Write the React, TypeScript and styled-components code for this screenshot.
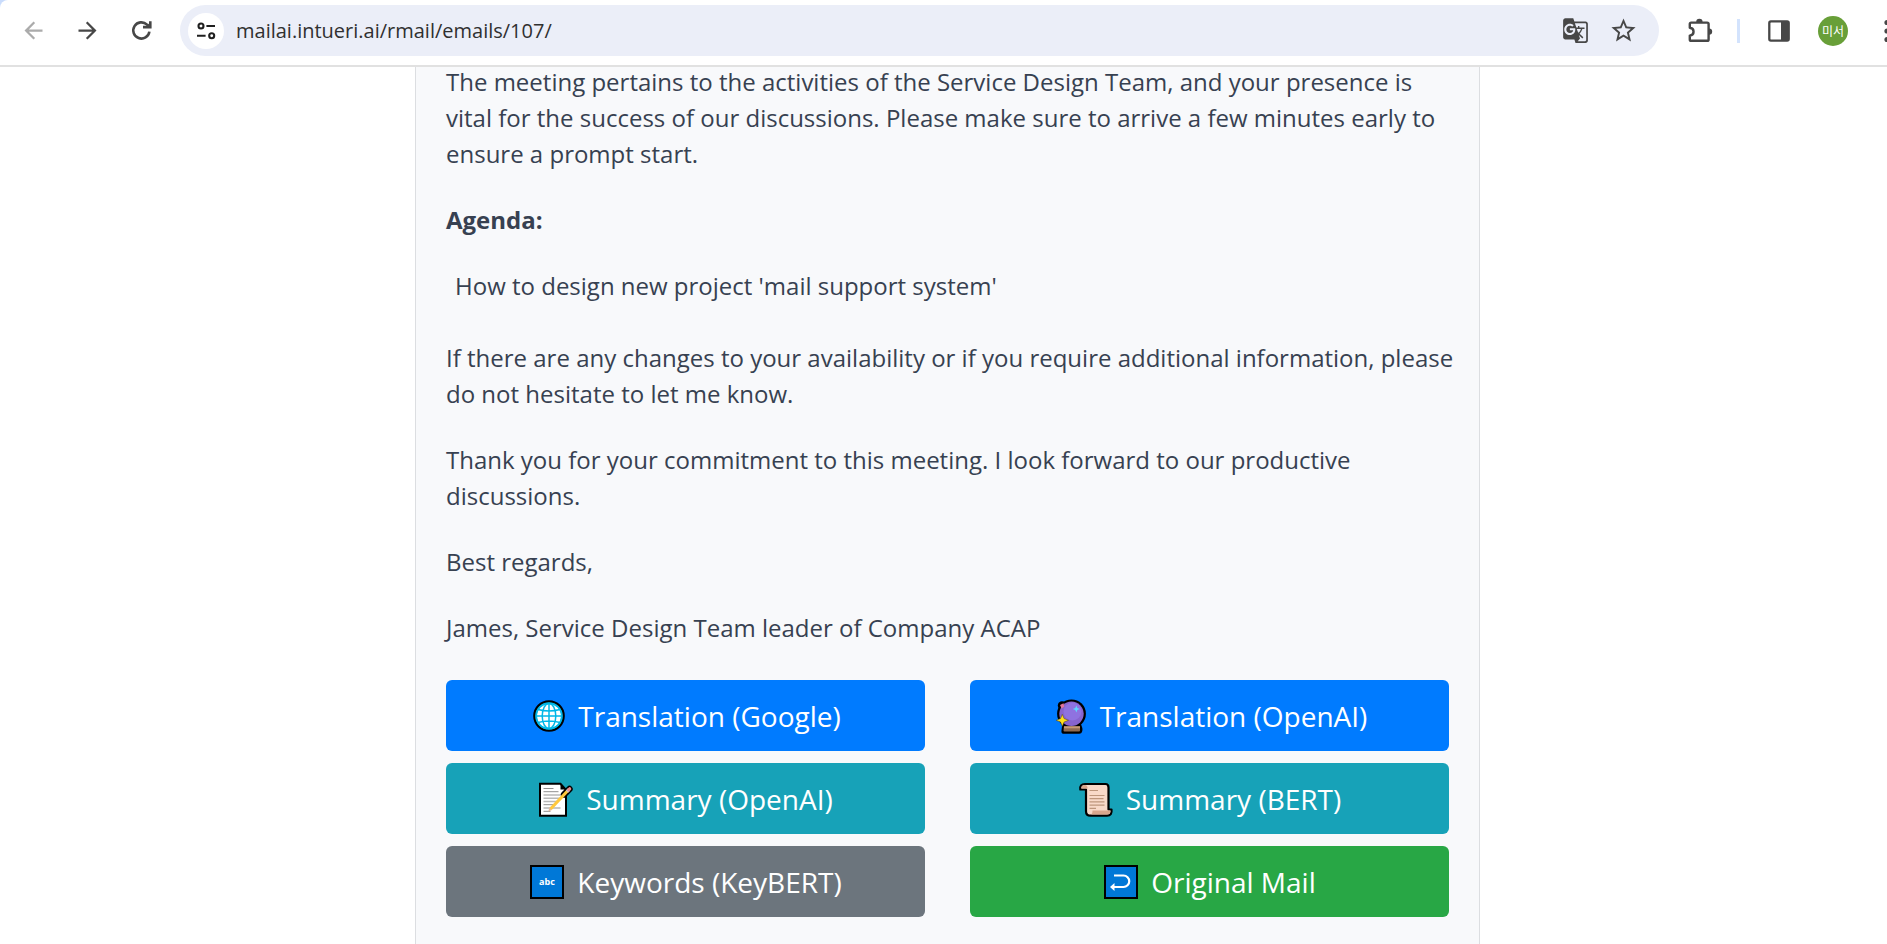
import React from "react";
import styled, { createGlobalStyle } from "styled-components";
import { MdArrowBack, MdArrowForward, MdGTranslate, MdStarBorder } from "react-icons/md";

const GlobalStyle = createGlobalStyle`
  * { box-sizing: border-box; }
  body {
    margin: 0;
    background: #ffffff;
    color: #374151;
    font-family: "Open Sans", "Noto Sans CJK KR", sans-serif;
  }
`;

const Shell = styled.div`
  display: flex;
  flex-direction: column;
  height: 100vh;
  overflow: hidden;
`;

/* ---------- browser bar ---------- */

const TabStripEdge = styled.header`
  position: relative;
  z-index: 1;
  flex: none;
  background: #c9dcfc;
`;

const Toolbar = styled.div`
  display: flex;
  align-items: center;
  padding: 5px 0 9px 6px;
  background: #ffffff;
  border-bottom: 2px solid #e1e1e1;
  border-top-left-radius: 8px;
`;

const ToolButton = styled.button<{ $tone?: string }>`
  display: flex;
  flex: none;
  align-items: center;
  justify-content: center;
  width: 54px;
  height: 48px;
  padding: 0;
  border: 0;
  background: none;
  color: ${(p) => p.$tone ?? "#474747"};
`;

const AddressBar = styled.form`
  display: flex;
  flex: 1;
  align-items: center;
  min-width: 0;
  height: 51px;
  margin-left: 12px;
  padding: 0 12px 0 8px;
  border-radius: 26px;
  background: #ebeef8;
`;

const SiteInfoButton = styled.button`
  display: flex;
  flex: none;
  align-items: center;
  justify-content: center;
  width: 36px;
  height: 36px;
  padding: 0;
  border: 0;
  border-radius: 50%;
  background: #ffffff;
  color: #1f1f1f;
`;

const AddressInput = styled.input`
  flex: 1;
  min-width: 0;
  height: 36px;
  padding: 0 12px;
  border: 0;
  outline: 0;
  background: none;
  color: #303030;
  font: 400 20px/28px "Open Sans", sans-serif;
`;

const AddressAction = styled(ToolButton)`
  width: 48px;
`;

const Extras = styled.div`
  display: flex;
  flex: none;
  align-items: center;
  padding-left: 14px;
`;

const Divider = styled.span`
  width: 3px;
  height: 24px;
  margin: 0 12px 0 10px;
  background: #d3e3fd;
`;

const Avatar = styled.span`
  display: flex;
  align-items: center;
  justify-content: center;
  width: 30px;
  height: 30px;
  border-radius: 50%;
  background: #689f38;
  color: #ffffff;
  font: 400 12px/16px "Noto Sans CJK KR", sans-serif;
`;

const MenuButton = styled(ToolButton)`
  justify-content: flex-end;
  width: 27px;
`;

/* ---------- mail ---------- */

const Page = styled.main`
  display: flex;
  flex: 1;
  justify-content: center;
  align-items: flex-start;
  margin-top: -3px;
  padding-left: 8px;
`;

const MailCard = styled.article`
  width: 100%;
  max-width: 1065px;
  padding: 0 30px 48px;
  border: 1px solid #dcdee1;
  border-width: 0 1px;
  background: #f8f9fb;
`;

const Paragraph = styled.p<{ $indent?: boolean; $loose?: boolean }>`
  margin: 0 0 ${(p) => (p.$loose ? 36 : 30)}px;
  padding-left: ${(p) => (p.$indent ? 9 : 0)}px;
  font-size: 24px;
  line-height: 36px;
  white-space: nowrap;
`;

const Actions = styled.div`
  display: grid;
  grid-template-columns: 1fr 1fr;
  gap: 12px 45px;
  padding-top: 4px;
`;

const ActionButton = styled.button<{ $color: string }>`
  display: flex;
  align-items: center;
  justify-content: center;
  gap: 10px;
  height: 71px;
  padding: 0 16px;
  border: 0;
  border-radius: 6px;
  background: ${(p) => p.$color};
  color: #ffffff;
  font: 400 28px/40px "Open Sans", sans-serif;
  white-space: nowrap;
`;

const Emoji = styled.svg.attrs({ viewBox: "0 0 38 38", "aria-hidden": true })`
  flex: none;
  width: 38px;
  height: 38px;
`;

/* ---------- drawings ---------- */

const ReloadIcon = () => (
  <svg width="27" height="27" viewBox="0 0 27 27" fill="none" stroke="currentColor" strokeWidth="2.6">
    <path d="M21.4 14.6A8.1 8.1 0 1 1 19 7.6L21 9.6" />
    <path d="M22.3 4.2V10.1H15" />
    <path d="M18 9.6L22 5.6V10z" fill="currentColor" stroke="none" />
  </svg>
);

const SiteInfoIcon = () => (
  <svg width="20" height="18" viewBox="0 0 20 18" fill="none" stroke="currentColor" strokeWidth="2.1">
    <circle cx="5" cy="4" r="2.5" />
    <path d="M10.4 4H19M1 13.7h8.6" />
    <circle cx="15.7" cy="13.7" r="2.5" />
  </svg>
);

const PuzzleIcon = () => (
  <svg width="27" height="27" viewBox="0 0 27 27">
    <path
      d="M4.2 5.6H20.2a1.4 1.4 0 0 1 1.4 1.4V22.4a1.4 1.4 0 0 1-1.4 1.4H4.2a1.4 1.4 0 0 1-1.4-1.4V18.6c5-.6 5-7.2 0-7.8V7a1.4 1.4 0 0 1 1.4-1.4z"
      fill="none"
      stroke="currentColor"
      strokeWidth="2.4"
      strokeLinejoin="round"
    />
    <path d="M9.2 5a3.2 3.2 0 0 1 6.4 0zM22 11.4a3.2 3.2 0 0 1 0 6.4z" fill="currentColor" />
  </svg>
);

const SidePanelIcon = () => (
  <svg width="22" height="22" viewBox="0 0 22 22">
    <rect x="1.3" y="1.3" width="19.4" height="19.4" rx="1.6" fill="none" stroke="currentColor" strokeWidth="2.3" />
    <path d="M13 1h7v20h-7z" fill="currentColor" />
  </svg>
);

const DotsIcon = () => (
  <svg width="3" height="24" viewBox="0 0 3 24" fill="currentColor">
    <circle cx="3" cy="3.5" r="2.6" />
    <circle cx="3" cy="12" r="2.6" />
    <circle cx="3" cy="20.5" r="2.6" />
  </svg>
);

const GlobeEmoji = () => (
  <Emoji>
    <circle cx="19" cy="19" r="14.8" fill="#00b7e8" stroke="#000" strokeWidth="2" />
    <circle cx="19" cy="19" r="12.2" fill="#fff" />
    <g fill="none" stroke="#00b7e8" strokeWidth="1.5">
      <circle cx="19" cy="19" r="12.6" />
      <ellipse cx="19" cy="19" rx="6.8" ry="12.4" />
      <path d="M19 6.5v25M6.5 19h25M8 12.5q11 3 22 0M8 25.5q11-3 22 0" />
    </g>
  </Emoji>
);

const CrystalBallEmoji = () => (
  <Emoji>
    <g transform="translate(-2 0)">
      <circle cx="12" cy="8.4" r="4.2" fill="#000" />
      <circle cx="21.5" cy="16.8" r="14.4" fill="#000" />
      <path d="M12.5 25.5h17.5q3.6 6 2 9.5q-.6 1.8-2.6 1.8H14q-2.6 0-2.6-2.6z" fill="#000" />
      <path d="M14 29h16v4.6q0 1-1 1H14.5q-1 0-1-1z" fill="#8e6a50" />
      <path d="M14 29.5h16v1.8H14z" fill="#c79a76" />
      <circle cx="21.5" cy="16.8" r="12.2" fill="#8764cf" />
      <circle cx="22.5" cy="14.5" r="9" fill="#8f72e0" />
      <path d="M10 8l3.500-1.800.8 3.200-2.800 2z" fill="#e2769a" />
      <path
        d="M12.300 17.300l1.800 4.300 4.400 1.700-4.400 1.700-1.800 4.300-1.800-4.300-4.400-1.700 4.400-1.700z"
        fill="#ffe01a"
        stroke="#4a3a20"
        strokeWidth=".5"
      />
      <path d="M26.300 8.600l1 2.500 2.500 1-2.500 1-1 2.500-1-2.500-2.500-1 2.500-1z" fill="#5fd6ff" />
    </g>
  </Emoji>
);

const MemoEmoji = () => (
  <Emoji>
    <path d="M2 3.800h20.500l5.500 6V35.700H2z" fill="#fff" stroke="#000" strokeWidth="2" />
    <path d="M22.500 4v5.500H28z" fill="#000" />
    <path d="M5.500 8.500h10M5.500 11.700h15M5.500 24.700h12M5.500 28h17M5.500 31.300h7" stroke="#8f8f8f" strokeWidth="1" />
    <path d="M5.500 15h17M5.500 18.200h17M5.500 21.400h15" stroke="#b8b8b8" strokeWidth="1.500" />
    <path d="M26 14.500L31.500 9" stroke="#000" strokeWidth="6.400" strokeLinecap="round" />
    <path d="M12.500 29L29.500 11" stroke="#ffc83d" strokeWidth="3.200" />
    <path d="M10.300 31.500l1-3.800 2.600 2.400z" fill="#e8b89a" />
    <path d="M29 11.500l2-2" stroke="#c8d0d8" strokeWidth="3.200" />
    <path d="M30.700 9.800l1-1" stroke="#f08a8a" strokeWidth="3.200" strokeLinecap="round" />
  </Emoji>
);

const ScrollEmoji = () => (
  <Emoji>
    <path
      d="M7 4H27.500q3 0 3 3.500V29.500H33.500q.8 6.200-4.500 6.200H12.500q-4.500 0-4.500-4.500V9.500H2.300Q1.500 4 7 4z"
      fill="#f8d9c8"
      stroke="#000"
      strokeWidth="2.200"
      strokeLinejoin="round"
    />
    <path d="M3.300 8.500q0-3.500 3.500-3.500 2.800 0 2.800 3.500zM14.500 30.500H32.500q0 4-3.500 4H12.500q2 0 2-4z" fill="#d9a68c" />
    <path
      d="M11.500 10.500h8.500M11.500 15.500h15M11.500 18.700h14M11.500 21.900h15M11.500 25.100h15M11.500 28.300h6.500"
      stroke="#bd967c"
      strokeWidth="1.200"
    />
  </Emoji>
);

const EmojiTile = () => <rect x="2" y="3" width="32" height="32" fill="#0078d7" stroke="#000" strokeWidth="2" />;

const AbcEmoji = () => (
  <Emoji>
    <EmojiTile />
    <text x="18" y="22" textAnchor="middle" fill="#fff" fontFamily="Open Sans, sans-serif" fontWeight="700" fontSize="9">
      abc
    </text>
  </Emoji>
);

const ReturnEmoji = () => (
  <Emoji>
    <EmojiTile />
    <path d="M11 12.500H20.500a5.700 5.700 0 0 1 0 11.500H10" fill="none" stroke="#fff" strokeWidth="2.200" />
    <path d="M7 24l4.500-4v8z" fill="#fff" />
  </Emoji>
);

const actions = [
  { label: "Translation (Google)", color: "#007bff", Icon: GlobeEmoji },
  { label: "Translation (OpenAI)", color: "#007bff", Icon: CrystalBallEmoji },
  { label: "Summary (OpenAI)", color: "#17a2b8", Icon: MemoEmoji },
  { label: "Summary (BERT)", color: "#17a2b8", Icon: ScrollEmoji },
  { label: "Keywords (KeyBERT)", color: "#6c757d", Icon: AbcEmoji },
  { label: "Original Mail", color: "#28a745", Icon: ReturnEmoji },
];

export default function App() {
  return (
    <Shell>
      <GlobalStyle />
      <TabStripEdge>
        <Toolbar>
          <ToolButton aria-label="Back" $tone="#ababab">
            <MdArrowBack size={27} />
          </ToolButton>
          <ToolButton aria-label="Forward">
            <MdArrowForward size={27} />
          </ToolButton>
          <ToolButton aria-label="Reload">
            <ReloadIcon />
          </ToolButton>
          <AddressBar>
            <SiteInfoButton type="button" aria-label="View site information">
              <SiteInfoIcon />
            </SiteInfoButton>
            <AddressInput aria-label="Address" defaultValue="mailai.intueri.ai/rmail/emails/107/" />
            <AddressAction type="button" aria-label="Translate this page">
              <MdGTranslate size={27} />
            </AddressAction>
            <AddressAction type="button" aria-label="Bookmark this tab">
              <MdStarBorder size={29} />
            </AddressAction>
          </AddressBar>
          <Extras>
            <ToolButton aria-label="Extensions">
              <PuzzleIcon />
            </ToolButton>
            <Divider />
            <ToolButton aria-label="Side panel">
              <SidePanelIcon />
            </ToolButton>
            <ToolButton aria-label="Profile">
              <Avatar>미서</Avatar>
            </ToolButton>
            <MenuButton aria-label="Menu">
              <DotsIcon />
            </MenuButton>
          </Extras>
        </Toolbar>
      </TabStripEdge>

      <Page>
        <MailCard>
          <Paragraph>
            The meeting pertains to the activities of the Service Design Team, and your presence is
            <br />
            vital for the success of our discussions. Please make sure to arrive a few minutes early to
            <br />
            ensure a prompt start.
          </Paragraph>
          <Paragraph>
            <strong>Agenda:</strong>
          </Paragraph>
          <Paragraph $indent $loose>
            How to design new project 'mail support system'
          </Paragraph>
          <Paragraph>
            If there are any changes to your availability or if you require additional information, please
            <br />
            do not hesitate to let me know.
          </Paragraph>
          <Paragraph>
            Thank you for your commitment to this meeting. I look forward to our productive
            <br />
            discussions.
          </Paragraph>
          <Paragraph>Best regards,</Paragraph>
          <Paragraph>James, Service Design Team leader of Company ACAP</Paragraph>
          <Actions>
            {actions.map(({ label, color, Icon }) => (
              <ActionButton key={label} type="button" $color={color}>
                <Icon />
                {label}
              </ActionButton>
            ))}
          </Actions>
        </MailCard>
      </Page>
    </Shell>
  );
}
